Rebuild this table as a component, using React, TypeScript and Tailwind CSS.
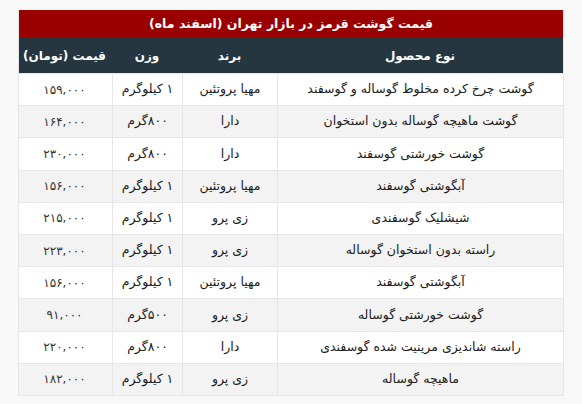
const rows = [
  ["گوشت چرخ کرده مخلوط گوساله و گوسفند", "مهیا پروتئین", "۱ کیلوگرم", "۱۵۹,۰۰۰"],
  ["گوشت ماهیچه گوساله بدون استخوان", "دارا", "۸۰۰گرم", "۱۶۴,۰۰۰"],
  ["گوشت خورشتی گوسفند", "دارا", "۸۰۰گرم", "۲۳۰,۰۰۰"],
  ["آبگوشتی گوسفند", "مهیا پروتئین", "۱ کیلوگرم", "۱۵۶,۰۰۰"],
  ["شیشلیک گوسفندی", "زی پرو", "۱ کیلوگرم", "۲۱۵,۰۰۰"],
  ["راسته بدون استخوان گوساله", "زی پرو", "۱ کیلوگرم", "۲۲۳,۰۰۰"],
  ["آبگوشتی گوسفند", "مهیا پروتئین", "۱ کیلوگرم", "۱۵۶,۰۰۰"],
  ["گوشت خورشتی گوساله", "زی پرو", "۵۰۰گرم", "۹۱,۰۰۰"],
  ["راسته شاندیزی مرینیت شده گوسفندی", "دارا", "۸۰۰گرم", "۲۲۰,۰۰۰"],
  ["ماهیچه گوساله", "زی پرو", "۱ کیلوگرم", "۱۸۲,۰۰۰"],
];

const headers = ["نوع محصول", "برند", "وزن", "قیمت (تومان)"];

export default function App() {
  return (
    <div
      className="w-[582px] h-[404px] bg-[#f8f8f8] pt-[10px] pl-[18px]"
      style={{ fontFamily: '"DejaVu Sans", sans-serif' }}
    >
      <div dir="rtl" className="w-[546px] border border-[#e6e6e6] border-t-0">
        <div className="h-[28px] bg-[#990000] text-white font-bold text-[12.5px] flex items-center justify-center">
          قیمت گوشت قرمز در بازار تهران (اسفند ماه)
        </div>
        <div className="grid grid-cols-[286px_95px_70px_95px] h-[35px] bg-[#253640] text-white font-bold text-[12px]">
          {headers.map((h) => (
            <div key={h} className="flex items-center justify-center">{h}</div>
          ))}
        </div>
        {rows.map((r, i) => (
          <div
            key={i}
            className={
              "grid grid-cols-[286px_95px_70px_95px] h-[32.2px] text-[12.5px] text-[#222] border-t border-[#e6e6e6] " +
              (i % 2 === 0 ? "bg-white" : "bg-[#f3f3f3]")
            }
          >
            {r.map((c, j) => (
              <div
                key={j}
                className={
                  "flex items-center justify-center " +
                  (j < 3 ? "border-l border-[#e6e6e6] " : "") +
                  (j === 3 ? "text-[12px] text-[#333]" : "")
                }
              >
                {c}
              </div>
            ))}
          </div>
        ))}
      </div>
    </div>
  );
}
